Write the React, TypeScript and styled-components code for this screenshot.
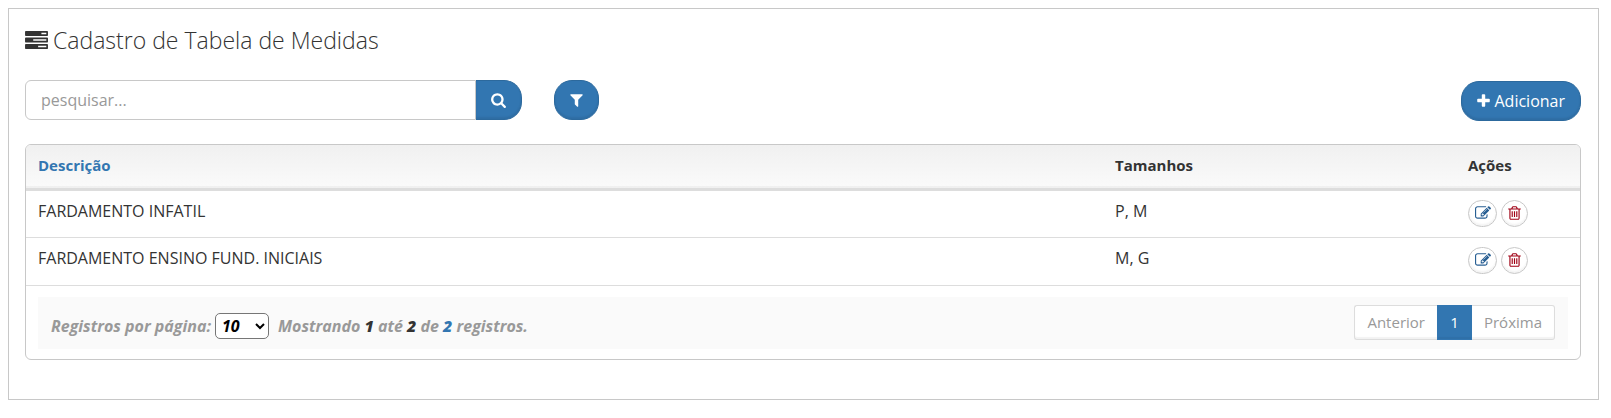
import React, { useState } from "react";
import styled, { createGlobalStyle, css } from "styled-components";

const blue = "#3276b1";
const line = "#c8c8c8";

const GlobalStyle = createGlobalStyle`
  *, *::before, *::after { box-sizing: border-box; }
  body {
    margin: 8px 12px 8px 8px;
    background: #fff;
    color: #333;
    font: 16px/24px "Open Sans", sans-serif;
  }
  button, input, select { font: inherit; margin: 0; }
`;

const Panel = styled.main`
  border: 1px solid ${line};
  padding: 15px 17px 39px 16px;
`;

const Title = styled.h1`
  display: flex;
  align-items: baseline;
  gap: 5px;
  margin: 0 0 23px;
  font-size: 23px;
  line-height: 33px;
  font-weight: 300;
`;

const Glyph = styled.svg<{ $width: number; $height: number }>`
  width: ${(p) => p.$width}px;
  height: ${(p) => p.$height}px;
  fill: currentColor;
  flex: none;
`;

const Toolbar = styled.div`
  display: flex;
  align-items: flex-start;
  gap: 32px;
  margin-bottom: 23px;
`;

const SearchForm = styled.form`
  display: flex;
  width: 497px;
`;

const SearchInput = styled.input`
  flex: 1;
  min-width: 0;
  height: 40px;
  padding: 0 15px;
  border: 1px solid ${line};
  border-radius: 6px 0 0 6px;
  color: #333;
  background: #fff;
  &::placeholder { color: #999; opacity: 1; }
`;

const PrimaryButton = styled.button<{ $joined?: boolean }>`
  display: flex;
  align-items: center;
  justify-content: center;
  gap: 4px;
  height: 40px;
  padding: 0 15px;
  border: 1px solid #2c699d;
  border-radius: ${(p) => (p.$joined ? "0 18px 18px 0" : "18px")};
  border-left-width: ${(p) => (p.$joined ? 0 : 1)}px;
  background: ${blue};
  box-shadow: inset 0 -2px 2px rgba(0, 0, 0, 0.08);
  color: #fff;
  cursor: pointer;
`;

const AddSlot = styled.div`
  margin-left: auto;
  padding-top: 1px;
`;

const TableFrame = styled.section`
  border: 1px solid ${line};
  border-radius: 6px;
  overflow: hidden;
`;

const Table = styled.table`
  width: 100%;
  table-layout: fixed;
  border-collapse: collapse;
`;

const SizesCol = styled.col`width: 353px;`;
const ActionsCol = styled.col`width: 124px;`;

const HeadRow = styled.tr`
  height: 44px;
  background: linear-gradient(#f0f0f0, #fafafa);
  border-bottom: 3px solid #ddd;
`;

const HeadCell = styled.th<{ $sorted?: boolean }>`
  padding: 0 12px 2px;
  text-align: left;
  font-size: 15px;
  font-weight: 700;
  color: ${(p) => (p.$sorted ? blue : "#333")};
`;

const BodyRow = styled.tr`
  height: 48px;
  border-bottom: 1px solid #ddd;
`;

const Cell = styled.td`
  padding: 8px 12px 0;
  vertical-align: top;
`;

const Actions = styled.div`
  display: flex;
  gap: 4px;
  padding-top: 1px;
`;

const RoundButton = styled.button<{ $danger?: boolean }>`
  display: flex;
  align-items: center;
  justify-content: center;
  width: ${(p) => (p.$danger ? 27 : 29)}px;
  height: 27px;
  padding: 0;
  border: 1px solid ${line};
  border-radius: 14px;
  background: #fff;
  box-shadow: inset 0 -2px 2px rgba(0, 0, 0, 0.05);
  color: ${(p) => (p.$danger ? "#a00014" : "#285f93")};
  cursor: pointer;
`;

const Footer = styled.footer`
  display: flex;
  align-items: flex-start;
  justify-content: space-between;
  margin: 11px 12px 10px;
  padding: 8px 13px 9px;
  background: #fafafa;
`;

const Summary = styled.div`
  display: flex;
  align-items: center;
  padding-top: 8px;
  color: #999;
  font-weight: 700;
  font-style: italic;
`;

const PageSize = styled.select`
  height: 26px;
  width: 54px;
  margin: 0 9px 0 4px;
  padding: 0 2px;
  border: 1px solid #767676;
  border-radius: 5px;
  background: #fff;
  color: #000;
`;

const Count = styled.strong<{ $total?: boolean }>`
  color: ${(p) => (p.$total ? blue : "#333")};
`;

const Pager = styled.nav`
  display: flex;
`;

const PageButton = styled.button<{ $active?: boolean }>`
  height: 35px;
  padding: 0 12px;
  border: 1px solid #ddd;
  background: #fff;
  box-shadow: inset 0 -2px 1px rgba(0, 0, 0, 0.05);
  color: #999;
  font-size: 15px;
  line-height: 20px;
  &:first-child { border-right: 0; border-radius: 3px 0 0 3px; }
  &:last-child { border-left: 0; border-radius: 0 3px 3px 0; }
  ${(p) =>
    p.$active &&
    css`
      width: 35px;
      border-color: ${blue};
      background: ${blue};
      color: #fff;
    `}
`;

const icons = {
  tasks: {
    box: "0 128 1792 1408",
    width: 23,
    height: 18,
    path: "M1024 1408h640v-128h-640v128zm-384-512h1024v-128h-1024v128zm640-512h384v-128h-384v128zm512 832v256q0 26-19 45t-45 19h-1664q-26 0-45-19t-19-45v-256q0-26 19-45t45-19h1664q26 0 45 19t19 45zm0-512v256q0 26-19 45t-45 19h-1664q-26 0-45-19t-19-45v-256q0-26 19-45t45-19h1664q26 0 45 19t19 45zm0-512v256q0 26-19 45t-45 19h-1664q-26 0-45-19t-19-45v-256q0-26 19-45t45-19h1664q26 0 45 19t19 45z",
  },
  search: {
    box: "64 0 1664 1792",
    width: 15,
    height: 16,
    path: "M1216 832q0-185-131.500-316.500t-316.500-131.500-316.500 131.500-131.500 316.500 131.500 316.500 316.500 131.500 316.500-131.500 131.500-316.500zm512 832q0 52-38 90t-90 38q-54 0-90-38l-343-342q-179 124-399 124-143 0-273.500-55.500t-225-150-150-225-55.500-273.500 55.500-273.500 150-225 225-150 273.500-55.500 273.500 55.500 225 150 150 225 55.500 273.500q0 220-124 399l343 343q37 37 37 90z",
  },
  filter: {
    box: "192 0 1408 1792",
    width: 13,
    height: 16,
    path: "M1595 295q17 41-14 70l-493 493v742q0 42-39 59-13 5-25 5-27 0-45-19l-256-256q-19-19-19-45v-486l-493-493q-31-29-14-70 17-39 59-39h1280q42 0 59 39z",
  },
  plus: {
    box: "192 0 1408 1792",
    width: 13,
    height: 16,
    path: "M1600 736v192q0 40-28 68t-68 28h-416v416q0 40-28 68t-68 28h-192q-40 0-68-28t-28-68v-416h-416q-40 0-68-28t-28-68v-192q0-40 28-68t68-28h416v-416q0-40 28-68t68-28h192q40 0 68 28t28 68v416h416q40 0 68 28t28 68z",
  },
  edit: {
    box: "0 0 1792 1792",
    width: 16,
    height: 16,
    path: "M888 1184l116-116-152-152-116 116v56h96v96h56zm440-720q-16-16-33 1l-350 350q-17 17-1 33t33-1l350-350q17-17 1-33zm80 594v190q0 119-84.500 203.500t-203.500 84.500h-832q-119 0-203.500-84.500t-84.500-203.500v-832q0-119 84.500-203.500t203.500-84.500h832q63 0 117 25 15 7 18 23 3 17-9 29l-49 49q-14 14-32 8-23-6-45-6h-832q-66 0-113 47t-47 113v832q0 66 47 113t113 47h832q66 0 113-47t47-113v-126q0-13 9-22l64-64q15-15 35-7t20 29zm-96-738l288 288-672 672h-288v-288zm444 132l-92 92-288-288 92-92q28-28 68-28t68 28l152 152q28 28 28 68t-28 68z",
  },
  trash: {
    box: "192 0 1408 1792",
    width: 13,
    height: 16,
    path: "M704 736v576q0 14-9 23t-23 9h-64q-14 0-23-9t-9-23v-576q0-14 9-23t23-9h64q14 0 23 9t9 23zm256 0v576q0 14-9 23t-23 9h-64q-14 0-23-9t-9-23v-576q0-14 9-23t23-9h64q14 0 23 9t9 23zm256 0v576q0 14-9 23t-23 9h-64q-14 0-23-9t-9-23v-576q0-14 9-23t23-9h64q14 0 23 9t9 23zm128 724v-948h-896v948q0 22 7 40.500t14.500 27 10.500 8.500h832q3 0 10.500-8.500t14.500-27 7-40.500zm-672-1076h448l-48-117q-7-9-17-11h-317q-10 2-17 11zm928 32v64q0 14-9 23t-23 9h-96v948q0 83-47 143.500t-113 60.500h-832q-66 0-113-58.500t-47-141.500v-952h-96q-14 0-23-9t-9-23v-64q0-14 9-23t23-9h309l70-167q15-37 54-63t79-26h320q40 0 79 26t54 63l70 167h309q14 0 23 9t9 23z",
  },
};

function Icon({ name }: { name: keyof typeof icons }) {
  const { box, width, height, path } = icons[name];
  return (
    <Glyph $width={width} $height={height} viewBox={box} aria-hidden="true">
      <path d={path} />
    </Glyph>
  );
}

const rows = [
  { description: "FARDAMENTO INFATIL", sizes: "P, M" },
  { description: "FARDAMENTO ENSINO FUND. INICIAIS", sizes: "M, G" },
];

export default function App() {
  const [query, setQuery] = useState("");
  const [pageSize, setPageSize] = useState("10");

  return (
    <>
      <GlobalStyle />
      <Panel>
        <Title>
          <Icon name="tasks" />
          Cadastro de Tabela de Medidas
        </Title>

        <Toolbar>
          <SearchForm role="search" onSubmit={(e) => e.preventDefault()}>
            <SearchInput
              type="text"
              aria-label="pesquisar"
              placeholder="pesquisar..."
              value={query}
              onChange={(e) => setQuery(e.target.value)}
            />
            <PrimaryButton type="submit" $joined aria-label="Pesquisar">
              <Icon name="search" />
            </PrimaryButton>
          </SearchForm>
          <PrimaryButton type="button" aria-label="Filtrar">
            <Icon name="filter" />
          </PrimaryButton>
          <AddSlot>
            <PrimaryButton type="button">
              <Icon name="plus" />
              Adicionar
            </PrimaryButton>
          </AddSlot>
        </Toolbar>

        <TableFrame>
          <Table>
            <colgroup>
              <col />
              <SizesCol />
              <ActionsCol />
            </colgroup>
            <thead>
              <HeadRow>
                <HeadCell scope="col" $sorted>Descrição</HeadCell>
                <HeadCell scope="col">Tamanhos</HeadCell>
                <HeadCell scope="col">Ações</HeadCell>
              </HeadRow>
            </thead>
            <tbody>
              {rows.map((row) => (
                <BodyRow key={row.description}>
                  <Cell>{row.description}</Cell>
                  <Cell>{row.sizes}</Cell>
                  <Cell>
                    <Actions>
                      <RoundButton type="button" aria-label="Editar">
                        <Icon name="edit" />
                      </RoundButton>
                      <RoundButton type="button" $danger aria-label="Excluir">
                        <Icon name="trash" />
                      </RoundButton>
                    </Actions>
                  </Cell>
                </BodyRow>
              ))}
            </tbody>
          </Table>
          <Footer>
            <Summary>
              <label htmlFor="page-size">Registros por página:</label>
              <PageSize
                id="page-size"
                value={pageSize}
                onChange={(e) => setPageSize(e.target.value)}
              >
                <option>10</option>
                <option>25</option>
                <option>50</option>
              </PageSize>
              <span>
                Mostrando <Count>1</Count> até <Count>2</Count> de{" "}
                <Count $total>2</Count> registros.
              </span>
            </Summary>
            <Pager aria-label="Paginação">
              <PageButton type="button">Anterior</PageButton>
              <PageButton type="button" $active aria-current="page">1</PageButton>
              <PageButton type="button">Próxima</PageButton>
            </Pager>
          </Footer>
        </TableFrame>
      </Panel>
    </>
  );
}
